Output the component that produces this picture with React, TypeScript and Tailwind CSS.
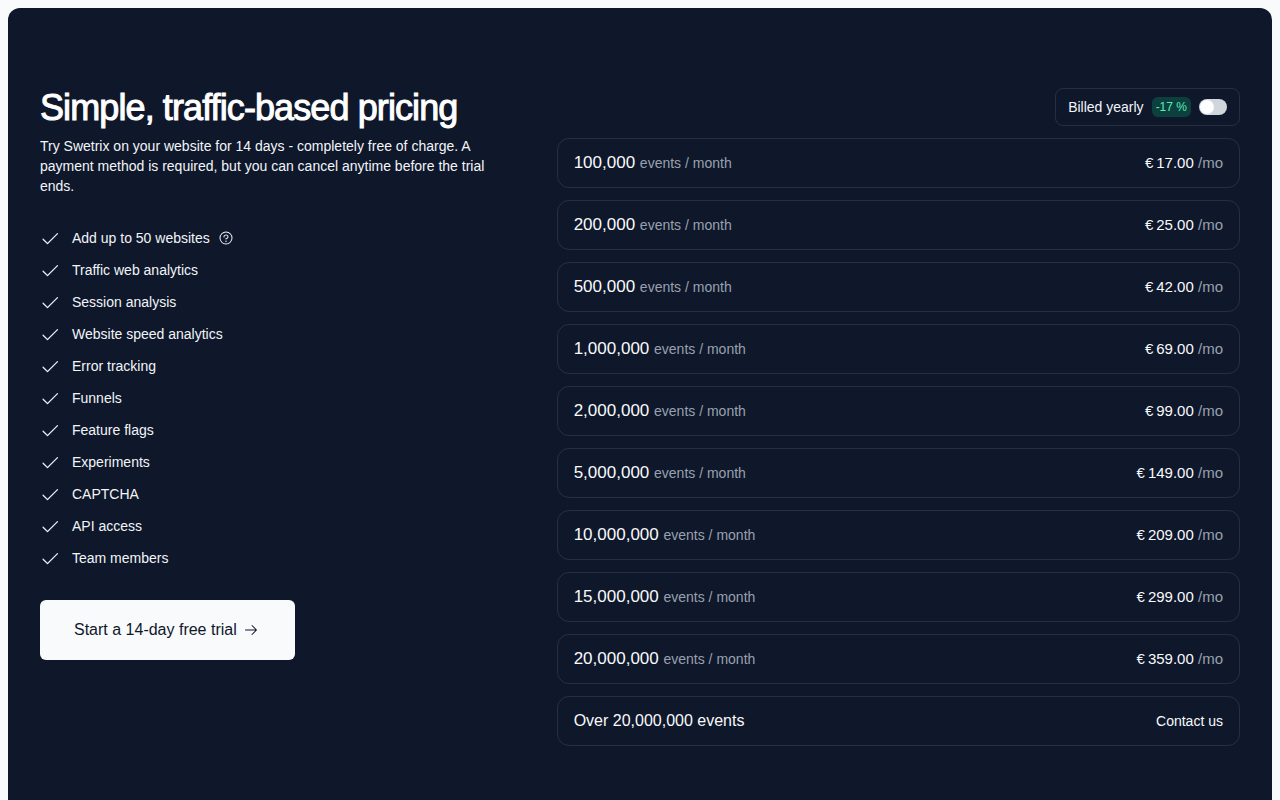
import React, { useState } from "react";
import { PiArrowRight, PiCheck, PiQuestion } from "react-icons/pi";

interface Tier {
  events: string;
  monthly: string;
  yearly: string;
}

const FEATURES = [
  "Add up to 50 websites",
  "Traffic web analytics",
  "Session analysis",
  "Website speed analytics",
  "Error tracking",
  "Funnels",
  "Feature flags",
  "Experiments",
  "CAPTCHA",
  "API access",
  "Team members",
];

const TIERS: Tier[] = [
  { events: "100,000", monthly: "17.00", yearly: "14.17" },
  { events: "200,000", monthly: "25.00", yearly: "20.83" },
  { events: "500,000", monthly: "42.00", yearly: "35.00" },
  { events: "1,000,000", monthly: "69.00", yearly: "57.50" },
  { events: "2,000,000", monthly: "99.00", yearly: "82.50" },
  { events: "5,000,000", monthly: "149.00", yearly: "124.17" },
  { events: "10,000,000", monthly: "209.00", yearly: "174.17" },
  { events: "15,000,000", monthly: "299.00", yearly: "249.17" },
  { events: "20,000,000", monthly: "359.00", yearly: "299.17" },
];

const FeatureList = () => (
  <ul className="mt-8 flex flex-col gap-3 text-sm text-slate-100">
    {FEATURES.map((feature, index) => (
      <li key={feature} className="flex items-center">
        <PiCheck className="mr-3 size-5 shrink-0" aria-hidden="true" />
        {feature}
        {index === 0 && (
          <button type="button" aria-label="More about website limits" className="ml-2">
            <PiQuestion className="size-4" />
          </button>
        )}
      </li>
    ))}
  </ul>
);

const TierRow = ({ tier, yearly }: { tier: Tier; yearly: boolean }) => (
  <li className="flex items-center justify-between rounded-xl border border-white/10 px-4 py-3">
    <p className="text-[17px] leading-6 text-slate-50">
      {tier.events} <span className="text-sm text-gray-400">events / month</span>
    </p>
    <p className="text-[15px] leading-5 text-slate-50">
      €&#8201;{yearly ? tier.yearly : tier.monthly} <span className="text-gray-400">/mo</span>
    </p>
  </li>
);

const App = () => {
  const [yearly, setYearly] = useState(false);

  return (
    <div className="bg-slate-50 p-2 font-['Liberation_Sans',Arial,sans-serif]">
      <section className="rounded-xl bg-[#0f172a] px-4 py-20 lg:px-8">
        <div className="mx-auto grid max-w-7xl grid-cols-1 gap-10 lg:grid-cols-12">
          <div className="lg:col-span-5">
            <h1 className="text-4xl font-normal tracking-tight text-white [-webkit-text-stroke:1px_white]">
              Simple, traffic-based pricing
            </h1>
            <p className="mt-2 text-sm text-slate-100">
              Try Swetrix on your website for 14 days - completely free of charge. A payment method
              is required, but you can cancel anytime before the trial ends.
            </p>
            <FeatureList />
            <a
              href="#signup"
              className="mt-8 inline-flex h-15 items-center gap-1.5 rounded-md bg-slate-50 pr-9 pl-[34px] text-base text-slate-900"
            >
              Start a 14-day free trial
              <PiArrowRight className="size-4" aria-hidden="true" />
            </a>
          </div>

          <div className="lg:col-span-7">
            <div className="flex justify-end">
              <label className="flex cursor-pointer items-center gap-2 rounded-lg border border-white/10 px-3 py-2 text-sm text-slate-100">
                Billed yearly
                <span className="rounded-md bg-emerald-500/25 px-1 text-xs leading-5 text-emerald-300">
                  -17 %
                </span>
                <input
                  type="checkbox"
                  role="switch"
                  checked={yearly}
                  onChange={(e) => setYearly(e.target.checked)}
                  className="h-4 w-7 cursor-pointer appearance-none rounded-full bg-gray-300 p-px before:block before:size-3.5 before:rounded-full before:bg-white checked:bg-emerald-500 checked:before:translate-x-3"
                />
              </label>
            </div>
            <ul className="mt-3 flex flex-col gap-3">
              {TIERS.map((tier) => (
                <TierRow key={tier.events} tier={tier} yearly={yearly} />
              ))}
              <li className="flex items-center justify-between rounded-xl border border-white/10 px-4 py-3 text-slate-50">
                <p className="text-base">Over 20,000,000 events</p>
                <a href="#contact" className="text-sm">
                  Contact us
                </a>
              </li>
            </ul>
          </div>
        </div>
      </section>
    </div>
  );
};

export default App;
